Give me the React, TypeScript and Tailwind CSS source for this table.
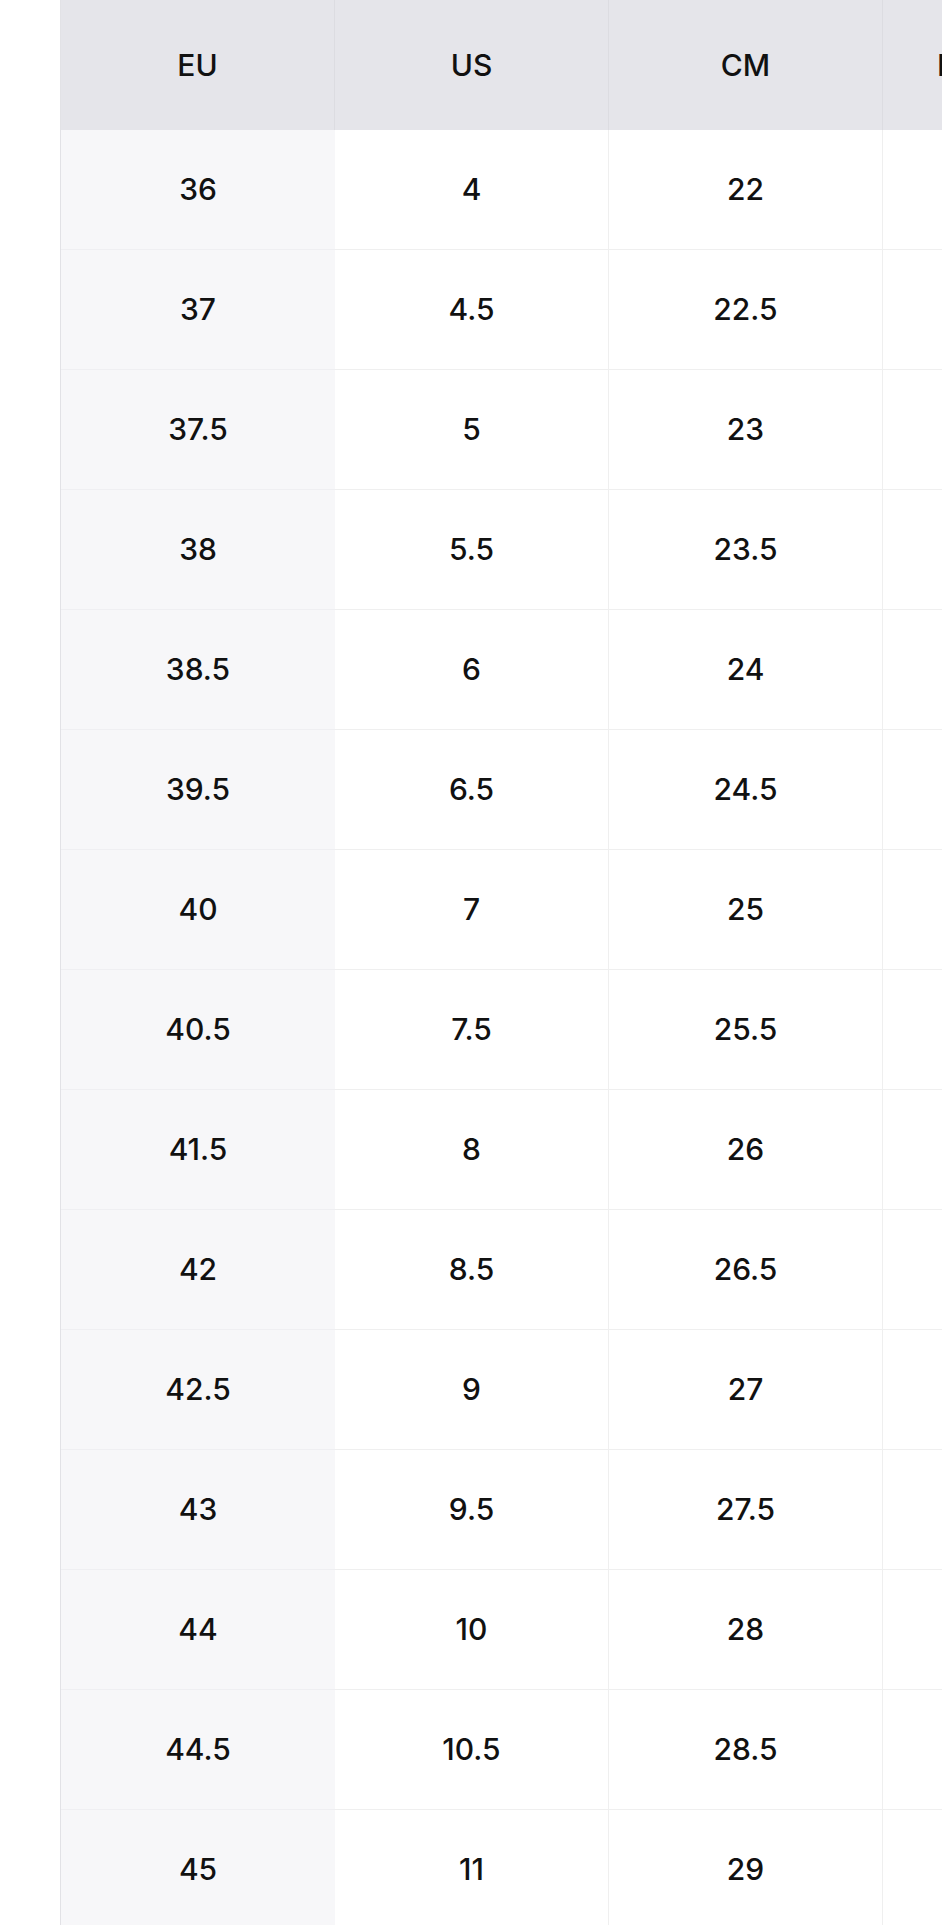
const EU = ["36", "37", "37.5", "38", "38.5", "39.5", "40", "40.5", "41.5", "42", "42.5", "43", "44", "44.5", "45"];
const US = ["4", "4.5", "5", "5.5", "6", "6.5", "7", "7.5", "8", "8.5", "9", "9.5", "10", "10.5", "11"];
const CM = ["22", "22.5", "23", "23.5", "24", "24.5", "25", "25.5", "26", "26.5", "27", "27.5", "28", "28.5", "29"];

const rows = EU.map((eu, i) => ({
  eu,
  us: US[i],
  cm: CM[i],
  mp: String(220 + i * 5),
}));

export default function App() {
  return (
    <div
      className="w-[942px] h-[1925px] overflow-hidden bg-white text-[30px] font-medium text-[#111]"
      style={{ fontFamily: "Inter, 'Noto Sans', sans-serif" }}
    >
      <div className="ml-[60px] w-[1096px] border-l border-[#e2e2e6]">
        {/* Header */}
        <div className="flex h-[130px] bg-[#e5e5ea]">
          <div className="w-[274px] shrink-0 flex items-center justify-center border-r border-[#dcdce1]">EU</div>
          <div className="w-[274px] shrink-0 flex items-center justify-center border-r border-[#dcdce1]">US</div>
          <div className="w-[274px] shrink-0 flex items-center justify-center border-r border-[#dcdce1]">CM</div>
          <div className="w-[274px] shrink-0 flex items-center pl-[54px]">Mondopoint</div>
        </div>

        {/* Body */}
        {rows.map((r) => (
          <div key={r.eu} className="flex h-[120px]">
            <div className="w-[274px] shrink-0 flex items-center justify-center bg-[#f7f7f9] border-b border-[#efeff2]">
              {r.eu}
            </div>
            <div className="w-[274px] shrink-0 flex items-center justify-center border-r border-b border-[#efefef]">
              {r.us}
            </div>
            <div className="w-[274px] shrink-0 flex items-center justify-center border-r border-b border-[#efefef]">
              {r.cm}
            </div>
            <div className="w-[274px] shrink-0 flex items-center justify-center border-b border-[#efefef]">
              {r.mp}
            </div>
          </div>
        ))}
      </div>
    </div>
  );
}
